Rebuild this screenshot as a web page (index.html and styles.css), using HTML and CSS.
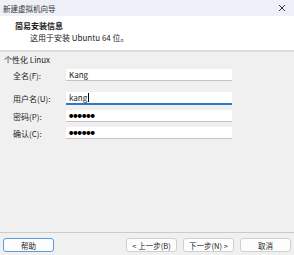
FILE: index.html
```html
<!DOCTYPE html>
<html lang="zh-CN">
<head>
    <meta charset="UTF-8">
    <title>新建虚拟机向导</title>
    <link rel="stylesheet" href="styles.css">
</head>
<body>
    <div class="window">
        <div class="titlebar">
            <span class="title">新建虚拟机向导</span>
            <span class="close">
                <svg width="8" height="8" viewBox="0 0 8 8"><path d="M1 1L7 7M7 1L1 7" stroke="#333" stroke-width="1"/></svg>
            </span>
        </div>

        <div class="header">
            <div class="header-title">简易安装信息</div>
            <div class="header-sub">这用于安装 Ubuntu 64 位。</div>
        </div>

        <div class="content">
            <div class="group-title">个性化 Linux</div>
            <div class="form-row first">
                <label>全名(F):</label>
                <div class="field">Kang</div>
            </div>
            <div class="form-row">
                <label>用户名(U):</label>
                <div class="field active">kang<span class="caret"></span></div>
            </div>
            <div class="form-row">
                <label>密码(P):</label>
                <div class="field dots">●●●●●●</div>
            </div>
            <div class="form-row">
                <label>确认(C):</label>
                <div class="field dots">●●●●●●</div>
            </div>
        </div>

        <div class="footer">
            <button class="btn btn-help">帮助</button>
            <div class="nav-buttons">
                <button class="btn">&lt; 上一步(B)</button>
                <button class="btn">下一步(N) &gt;</button>
                <button class="btn">取消</button>
            </div>
        </div>
    </div>
</body>
</html>
```

FILE: styles.css
```css
body {
    margin: 0;
    font-family: "Noto Sans CJK SC", "Noto Sans", sans-serif;
    font-size: 8px;
    color: #222;
    background-color: #f0f0f0;
}
.window {
    width: 294px;
    height: 255px;
    display: flex;
    flex-direction: column;
    overflow: hidden;
}
.titlebar {
    height: 16px;
    background-color: #eef0f7;
    display: flex;
    align-items: center;
    justify-content: space-between;
    padding: 0 8px 0 3px;
}
.title {
    font-size: 7.5px;
    color: #333;
}
.close {
    display: flex;
}
.header {
    height: 34px;
    background-color: #fff;
    border-bottom: 2px solid #dcdcdc;
    box-sizing: content-box;
}
.header-title {
    font-weight: bold;
    margin: 5px 0 0 15px;
    line-height: 10px;
}
.header-sub {
    margin: 2px 0 0 30px;
    line-height: 10px;
}
.content {
    height: 180px;
    padding-top: 3px;
    box-sizing: border-box;
}
.group-title {
    line-height: 10px;
    margin-left: 4px;
    margin-bottom: 4px;
}
.form-row {
    display: flex;
    align-items: center;
    margin-bottom: 5px;
}
.form-row.first {
    margin-bottom: 11px;
}
.form-row label {
    width: 53px;
    margin-left: 13px;
}
.field {
    width: 166px;
    height: 12px;
    box-sizing: border-box;
    background-color: #fff;
    border-bottom: 1px solid #c4c4c4;
    line-height: 11px;
    padding-left: 3px;
    display: flex;
    align-items: center;
}
.field.active {
    border-bottom: 2px solid #2f79c9;
    height: 13px;
}
.caret {
    display: inline-block;
    width: 1px;
    height: 9px;
    background-color: #000;
    margin-left: 1px;
}
.dots {
    font-size: 4.3px;
    color: #000;
}
.footer {
    border-top: 1px solid #cbcbcb;
    display: flex;
    justify-content: space-between;
    padding: 5px 3px 0 3px;
}
.nav-buttons {
    display: flex;
    gap: 6px;
}
.btn {
    height: 14px;
    width: 51px;
    padding: 0;
    font-family: inherit;
    font-size: 7.5px;
    color: #222;
    background-color: #fdfdfd;
    border: 1px solid #d0d0d0;
    border-radius: 3px;
}
.btn-help {
    border-color: #5b9be0;
}
```
